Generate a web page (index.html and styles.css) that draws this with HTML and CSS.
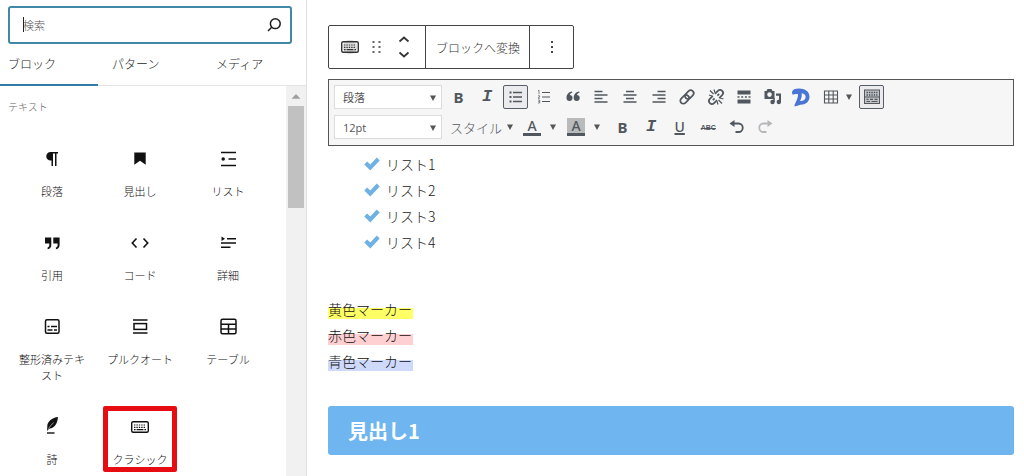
FILE: index.html
```
<!DOCTYPE html>
<html lang="ja">
<head>
<meta charset="utf-8">
<title>ブロックエディター</title>
<link rel="stylesheet" href="styles.css">
</head>
<body>
<svg class="defs" aria-hidden="true">
  <symbol id="keyboard" viewBox="0 0 24 24"><rect x="3.7" y="6.7" width="16.6" height="10.6" rx="1.5" fill="none" stroke="currentColor" stroke-width="1.4"/><path d="M6 10h12M6 12.3h12" stroke="currentColor" stroke-width="1.2" stroke-dasharray="1.4 1"/><path d="M6 14.7h1.6M8.6 14.7h6.8M16.4 14.7H18" stroke="currentColor" stroke-width="1.3"/></symbol>
  <symbol id="caret" viewBox="0 0 8 8"><path d="M1 1.500h6L4 7z" fill="currentColor"/></symbol>
  <symbol id="check" viewBox="0 0 16 16"><path d="M.3 8.400 3.100 5.500l3.200 3L12.800 1.600 15.700 4.600 6.300 14.600z" fill="#6fb1e4"/></symbol>
</svg>
<div class="editor">
  <aside class="inserter">
    <div class="search">
      <input class="search-input" type="search" placeholder="検索" aria-label="検索">
      <span class="text-cursor"></span>
      <button class="search-button" aria-label="検索する"><svg width="16" height="16" viewBox="0 0 16 16" fill="none" stroke="#1e1e1e" stroke-width="1.5"><circle cx="9.300" cy="6.700" r="4.900"/><path d="M5.700 10.300 2 14"/></svg></button>
    </div>
    <div class="tabs" role="tablist">
      <button class="tab tab-active" role="tab" aria-selected="true">ブロック</button>
      <button class="tab" role="tab" aria-selected="false">パターン</button>
      <button class="tab" role="tab" aria-selected="false">メディア</button>
    </div>
    <div class="panel">
      <div class="blocks">
        <h2 class="category">テキスト</h2>
        <div class="block-grid">
          <button class="block"><svg class="icon" viewBox="0 0 24 24"><path d="M10.500 5H18v1.500h-1.500V19H15V6.500h-2V19h-1.500v-5.500h-1a4.250 4.250 0 0 1 0-8.500z" fill="currentColor"/></svg>段落</button>
          <button class="block"><svg class="icon" viewBox="0 0 24 24"><path d="M6.300 5.500h11.400v12.300L12 13.800l-5.700 4z" fill="currentColor"/></svg>見出し</button>
          <button class="block"><svg class="icon" viewBox="0 0 24 24" stroke="currentColor" stroke-width="1.500"><path d="M5 5.500h15M12.500 12H20M5 18.500h15"/><circle cx="7.200" cy="12" r="1" fill="currentColor"/></svg>リスト</button>
          <button class="block"><svg class="icon" viewBox="0 0 24 24" fill="currentColor"><path d="M5 6.500h6.300v7.200c0 2.500-1.200 4.200-3.500 4.500l-.4-1.500c1.200-.3 1.900-1.200 1.900-2.700v-1.500H5zM13.300 6.500h6.300v7.200c0 2.500-1.200 4.200-3.500 4.500l-.4-1.500c1.200-.3 1.900-1.200 1.900-2.700v-1.500h-4.300z"/></svg>引用</button>
          <button class="block"><svg class="icon" viewBox="0 0 24 24" fill="none" stroke="currentColor" stroke-width="1.600"><path d="M8.500 7.500 4.300 12l4.200 4.500M15.500 7.500l4.200 4.500-4.200 4.500"/></svg>コード</button>
          <button class="block"><svg class="icon" viewBox="0 0 24 24" stroke="currentColor" stroke-width="1.500"><path d="M11 7.800h9M5 12h15M5 16.200h9.500"/><path d="M5.500 5.500 9 7.800l-3.500 2.200z" fill="currentColor" stroke="none"/></svg>詳細</button>
          <button class="block"><svg class="icon" viewBox="0 0 24 24" fill="none" stroke="currentColor" stroke-width="1.500"><rect x="5.500" y="4.800" width="13.500" height="13.400" rx="1.500"/><path d="M7.500 11.500h2M11 11.500h6M7.500 15h5M14 15h3" stroke-width="1.300"/></svg>整形済みテキスト</button>
          <button class="block"><svg class="icon" viewBox="0 0 24 24" fill="none" stroke="currentColor" stroke-width="1.500"><path d="M5 5h14.500M5 18h14.500"/><rect x="6" y="8.600" width="12.500" height="5.800"/></svg>プルクオート</button>
          <button class="block"><svg class="icon" viewBox="0 0 24 24" fill="none" stroke="currentColor" stroke-width="1.500"><rect x="5" y="4.300" width="15" height="14.400" rx="1.500"/><path d="M5 9.300h15M5 14h15M12.500 9.300v9.400"/></svg>テーブル</button>
          <button class="block"><svg class="icon" viewBox="0 0 24 24"><path d="M18 2C12.500 2.500 7 6.500 7.300 11.500L7 16l2.800-2.600c4.500-.2 7.500-4.200 8.200-11.400z" fill="currentColor"/><path d="M7.800 15.500c1.500-3.700 3.500-6 6-8" stroke="#fff" stroke-width=".5" fill="none"/><path d="M7 18h7.500" stroke="currentColor" stroke-width="1.400"/></svg>詩</button>
          <button class="block block-marked"><svg class="icon"><use href="#keyboard"/></svg>クラシック</button>
        </div>
      </div>
      <div class="scrollbar" aria-hidden="true"><svg class="scroll-arrow" viewBox="0 0 20 20"><path d="M4.500 13.500 10 7.500l5.500 6z" fill="#a0a0a0"/></svg><div class="scroll-thumb"></div></div>
    </div>
  </aside>

  <main class="content">
    <div class="block-toolbar">
      <div class="segment movers">
        <button class="plain shaded" aria-label="クラシック"><svg class="icon"><use href="#keyboard"/></svg></button>
        <button class="plain" aria-label="ドラッグ"><svg width="12" height="16" viewBox="0 0 12 16" fill="#666"><path d="M1.500 2h2v2h-2zM7.500 2h2v2h-2zM1.500 7h2v2h-2zM7.500 7h2v2h-2zM1.500 12h2v2h-2zM7.500 12h2v2h-2z"/></svg></button>
        <span class="arrows">
          <button class="plain" aria-label="上に移動"><svg width="12" height="10" viewBox="0 0 12 10" fill="none" stroke="#333" stroke-width="1.700"><path d="m1.500 6.500 4.500-4 4.500 4"/></svg></button>
          <button class="plain" aria-label="下に移動"><svg width="12" height="10" viewBox="0 0 12 10" fill="none" stroke="#333" stroke-width="1.700"><path d="m1.500 3.500 4.500 4 4.500-4"/></svg></button>
        </span>
      </div>
      <button class="plain segment convert">ブロックへ変換</button>
      <button class="plain segment options" aria-label="オプション"><svg width="4" height="16" viewBox="0 0 4 16" fill="#444"><path d="M1 2h2v2H1zM1 7h2v2H1zM1 12h2v2H1z"/></svg></button>
    </div>

    <div class="classic-toolbar">
      <div class="tool-row">
        <span class="picker"><select class="picker-select" aria-label="段落スタイル"><option>段落</option></select><svg class="caret picker-caret"><use href="#caret"/></svg></span>
        <div class="tools tools-main">
          <button class="tool glyph bold" aria-label="太字">B</button>
          <button class="tool glyph italic" aria-label="イタリック">I</button>
          <button class="tool tool-on" aria-label="箇条書き"><svg viewBox="0 0 20 20" width="20" height="20"><path d="M7 5.500h9M7 10h9M7 14.500h9" stroke="currentColor" stroke-width="1.300"/><path d="M3.500 4.500h2v2h-2zM3.500 9h2v2h-2zM3.500 13.500h2v2h-2z" fill="currentColor"/></svg></button>
          <button class="tool" aria-label="番号付きリスト"><svg viewBox="0 0 20 20" width="20" height="20" fill="none" stroke="currentColor"><path d="M8 5.500h8M8 10h8M8 14.500h8" stroke-width="1.200"/><path d="m4 4 1-.8v4M4 8.800h1.700v1.100L4 11.200h1.900M4 13h1.700v3H4M4.300 14.500h1.200" stroke-width=".7"/></svg></button>
          <button class="tool" aria-label="引用"><svg viewBox="0 0 20 20" width="20" height="20" fill="currentColor"><path d="M9 4.500C5.500 5 3.500 7.500 3.500 11a3 3 0 1 0 3.200-3c.4-1.200 1.200-1.900 2.600-2.300zM16.200 4.500c-3.500.5-5.500 3-5.500 6.500a3 3 0 1 0 3.200-3c.4-1.200 1.200-1.900 2.600-2.300z"/></svg></button>
          <button class="tool" aria-label="左寄せ"><svg viewBox="0 0 20 20" width="20" height="20" stroke="currentColor" stroke-width="1.700"><path d="M3.500 4.500h8M3.500 8h13M3.500 11.500h8M3.500 15h13"/></svg></button>
          <button class="tool" aria-label="中央寄せ"><svg viewBox="0 0 20 20" width="20" height="20" stroke="currentColor" stroke-width="1.700"><path d="M6 4.500h8M3.500 8h13M6 11.500h8M3.500 15h13"/></svg></button>
          <button class="tool" aria-label="右寄せ"><svg viewBox="0 0 20 20" width="20" height="20" stroke="currentColor" stroke-width="1.700"><path d="M8.500 4.500h8M3.500 8h13M8.500 11.500h8M3.500 15h13"/></svg></button>
          <button class="tool" aria-label="リンク"><svg viewBox="0 0 20 20" width="20" height="20" fill="none" stroke="currentColor" stroke-width="1.700"><g transform="rotate(-45 10 10)"><rect x="1.800" y="7" width="9.800" height="6" rx="3"/><rect x="8.400" y="7" width="9.800" height="6" rx="3"/></g></svg></button>
          <button class="tool" aria-label="リンク解除"><svg viewBox="0 0 20 20" width="20" height="20" fill="none" stroke="currentColor" stroke-width="1.700"><g transform="rotate(-45 10 10)"><path d="M8.500 7H4.300a3 3 0 0 0 0 6H8.500M11.500 7h4.200a3 3 0 0 1 0 6H11.500M5.500 10H8M12 10h2.500"/></g><path d="M4 3.500l3.500 3.500M8 2.500l1 3.200M3 8l3 1M12.500 13l3.500 3.500M11 14.300l1 3.200M14 11l3.500 1" stroke-width="1.200"/></svg></button>
          <button class="tool" aria-label="続きを読む"><svg viewBox="0 0 20 20" width="20" height="20" fill="currentColor"><path d="M3.500 3.500h13v4h-13zM3.500 12.500h13v4h-13zM3.500 9.300h2v1.400h-2zM7.200 9.300h2v1.400h-2zM10.900 9.300h2v1.400h-2zM14.500 9.300h2v1.400h-2z"/></svg></button>
          <button class="tool" aria-label="メディアを追加"><svg viewBox="0 0 20 20" width="20" height="20"><path fill="currentColor" fill-rule="evenodd" d="M1.500 4h2l1-2h4l1 2h2v8h-10zM6.500 5.300a2.300 2.300 0 1 0 0 4.600 2.300 2.300 0 0 0 0-4.600z"/><path fill="currentColor" d="M13 6.500h5V15a2.200 2.200 0 1 1-2-2.200V8.800h-3z"/><circle cx="9.500" cy="15" r="2.200" fill="currentColor"/><path d="M11 15v-4" stroke="currentColor" stroke-width="1.500"/></svg></button>
          <button class="tool brand" aria-label="ショートコード"><svg viewBox="0 0 20 20" width="20" height="20" fill="#4a75d6"><path fill-rule="evenodd" d="M1 5C1.500 2.500 4 1.500 8 1.500c6 0 10.500 3 10.500 8.300 0 5-4 8-9 8L3.800 19.500c-.8-1 .2-2.500 1-4.200C6.300 12 7 10 7 7.200 5 6.700 3 7.500 1.800 7.700 1.200 7 .9 6 1 5zM10.700 6.300c.3 3.200-.3 5.500-1.700 7.700 3.300.2 5.600-1.300 5.600-4.100 0-2-1.400-3.200-3.900-3.600z"/></svg></button>
        </div>
        <button class="tool split" aria-label="テーブル"><svg viewBox="0 0 20 20" width="20" height="20" fill="none" stroke="currentColor" stroke-width="1.100"><path d="M3.500 4h13v12h-13zM3.500 8h13M3.500 12h13M7.800 4v12M12.200 4v12"/></svg><svg class="caret"><use href="#caret"/></svg></button>
        <button class="tool tool-on" aria-label="ツールバー切り替え"><svg viewBox="0 0 20 20" width="20" height="20"><rect x="2.500" y="3" width="15" height="13.500" fill="#c2c4c7" stroke="currentColor"/><path d="M4.500 5.500h11M4.500 8h11" stroke="currentColor" stroke-width="1.500" stroke-dasharray="1.500 .9"/><path d="M3 10h14M4.500 14.500H8M9.500 14.500h6M4.500 12.300h2M8 12.300h3M12.500 12.300h3" stroke="currentColor" stroke-width="1.200"/></svg></button>
      </div>
      <div class="tool-row">
        <span class="picker"><select class="picker-select" aria-label="文字サイズ"><option>12pt</option></select><svg class="caret picker-caret"><use href="#caret"/></svg></span>
        <button class="tool split formats">スタイル<svg class="caret"><use href="#caret"/></svg></button>
        <button class="tool split color" aria-label="文字色"><span class="swatch">A</span><svg class="caret"><use href="#caret"/></svg></button>
        <button class="tool split color" aria-label="背景色"><span class="swatch swatch-fill">A</span><svg class="caret"><use href="#caret"/></svg></button>
        <div class="tools tools-sub">
          <button class="tool glyph bold" aria-label="太字">B</button>
          <button class="tool glyph italic" aria-label="イタリック">I</button>
          <button class="tool glyph under" aria-label="下線">U</button>
          <button class="tool strike" aria-label="打ち消し">ABC</button>
          <button class="tool" aria-label="取り消し"><svg viewBox="0 0 20 20" width="20" height="20"><path d="M5 6.500h6.500a4.200 4.200 0 0 1 0 8.500H8.500" fill="none" stroke="currentColor" stroke-width="1.800"/><path d="M2.500 6.500 7.500 3v7z" fill="currentColor"/></svg></button>
          <button class="tool faded" aria-label="やり直し"><svg viewBox="0 0 20 20" width="20" height="20"><path d="M15 6.500H8.500a4.200 4.200 0 0 0 0 8.500h3" fill="none" stroke="currentColor" stroke-width="1.800"/><path d="M17.500 6.500 12.500 3v7z" fill="currentColor"/></svg></button>
        </div>
      </div>
    </div>

    <ul class="check-list">
      <li><svg class="check"><use href="#check"/></svg>リスト1</li>
      <li><svg class="check"><use href="#check"/></svg>リスト2</li>
      <li><svg class="check"><use href="#check"/></svg>リスト3</li>
      <li><svg class="check"><use href="#check"/></svg>リスト4</li>
    </ul>
    <p class="markers"><mark class="yellow">黄色マーカー</mark><br><mark class="red">赤色マーカー</mark><br><mark class="blue">青色マーカー</mark></p>
    <h2 class="heading">見出し1</h2>
  </main>
</div>
</body>
</html>
```
FILE: styles.css
```
* { box-sizing: border-box; }
body {
  margin: 0;
  font-family: "Noto Sans CJK JP", sans-serif;
  font-size: 12px;
  font-weight: 300;
  color: #1e1e1e;
  background: #fff;
}
button, input, select { font: inherit; color: inherit; }
button { border: 0; padding: 0; background: none; }
svg { display: block; flex: none; }
.defs { position: absolute; width: 0; height: 0; }
.icon { width: 24px; height: 24px; }
.caret { width: 8px; height: 8px; color: #555; }

.editor { display: grid; grid-template-columns: 307px 1fr; height: 100vh; overflow: hidden; }

/* Inserter */
.inserter { display: flex; flex-direction: column; min-height: 0; border-right: 1px solid #e0e0e0; }
.search {
  position: relative;
  display: flex;
  align-items: center;
  height: 38px;
  margin: 6px 14px 0 8px;
  border: 2px solid #4287a5;
  border-radius: 3px;
}
.search-input {
  flex: 1;
  min-width: 0;
  padding: 0 0 0 13px;
  border: 0;
  outline: 0;
  background: none;
  font-size: 11px;
}
.search-input::placeholder { color: #555; }
.text-cursor { position: absolute; left: 13px; top: 9px; width: 1px; height: 15px; background: #222; }
.search-button { padding: 0 8px; }
.tabs { display: flex; gap: 6px; height: 42px; border-bottom: 1px solid #e4e4e4; }
.tab { flex: 1; padding: 0 8px 2px; text-align: left; border-bottom: 2px solid transparent; margin-bottom: -1px; }
.tab-active { border-color: #2f7ba3; }
.panel { display: flex; flex: 1; min-height: 0; }
.blocks { flex: 1; padding: 11px 14px 0 8px; overflow: hidden; }
.category { margin: 0; font-size: 10px; font-weight: 300; line-height: 20px; color: #666; }
.block-grid { display: grid; grid-template-columns: repeat(3, 1fr); padding-top: 14px; }
.block {
  position: relative;
  display: flex;
  flex-direction: column;
  align-items: center;
  gap: 12px;
  padding: 16px 10px;
  font-size: 11px;
  line-height: 16px;
  color: #111;
}
.block-marked::after {
  content: "";
  position: absolute;
  inset: 7px 7px 11px;
  border: 5px solid #e60c12;
  border-radius: 2px;
}
.scrollbar { width: 20px; padding: 0 2px; background: #f1f1f1; }
.scroll-arrow { width: 16px; height: 20px; }
.scroll-thumb { height: 102px; background: #c1c1c1; }

/* Block toolbar */
.content { padding: 25px 10px 0 21px; min-width: 0; }
.block-toolbar { display: flex; width: max-content; height: 44px; border: 1px solid #444; border-radius: 2px; }
.segment + .segment { border-left: 1px solid #444; }
.movers { display: flex; align-items: center; gap: 9px; padding: 0 15px 0 9px; }
.plain { display: flex; align-items: center; justify-content: center; color: #333; }
.shaded { background: radial-gradient(#ddd 40%, transparent 45%); }
.arrows { display: flex; flex-direction: column; gap: 4px; padding-left: 6px; }
.convert { padding: 0 9px 0 10px; }
.options { width: 44px; }

/* Classic toolbar */
.classic-toolbar {
  display: flex;
  flex-direction: column;
  gap: 6px;
  margin-top: 10px;
  padding: 5px 5px 6px;
  border: 1px solid #555;
  background: #f6f6f6;
  color: #50575e;
}
.tool-row { display: flex; align-items: center; height: 24px; }
.picker { position: relative; width: 108px; margin-right: 4px; }
.picker-select {
  display: block;
  appearance: none;
  width: 100%;
  height: 24px;
  padding: 0 8px;
  border: 1px solid #ddd;
  border-radius: 0;
  background: #fff;
  font-family: "Open Sans", "Noto Sans CJK JP", sans-serif;
  font-size: 11px;
  font-weight: 400;
  color: #555;
}
.picker-caret { position: absolute; right: 5px; top: 9px; }
.tools { display: flex; justify-content: space-between; }
.tools-main { width: 368px; margin-right: 5px; }
.tools-sub { width: 168px; }
.tool { display: flex; align-items: center; justify-content: center; width: 25px; height: 24px; flex: none; }
.tool-on { border: 1px solid #555d66; background: #ebebed; border-radius: 2px; }
.glyph { font-family: "Noto Sans", sans-serif; font-size: 15px; line-height: 20px; font-weight: 700; }
.italic { font-family: "Liberation Mono", monospace; font-size: 17px; font-style: italic; }
.under { font-weight: 500; font-size: 14px; text-decoration: underline; text-decoration-thickness: 2px; }
.strike { font-family: "Liberation Sans", sans-serif; font-size: 7px; font-weight: 700; text-decoration: line-through; }
.faded { color: #b5b7ba; }
.split { width: 36px; gap: 4px; margin-right: 4px; }
.formats { width: 72px; font-size: 13px; }
.color { width: 36px; gap: 8px; margin-right: 8px; }
.swatch {
  width: 18px;
  height: 18px;
  border-bottom: 3px solid #50575e;
  font-family: "Noto Sans", sans-serif;
  font-size: 14px;
  font-weight: 500;
  line-height: 15px;
}
.swatch-fill { background: #b9babb; }

/* Post content */
.check-list { list-style: none; margin: 5px 0 0; padding: 0 0 0 36px; font-size: 14px; line-height: 26px; color: #222; }
.check-list li { display: flex; align-items: center; gap: 6px; }
.check { width: 16px; height: 16px; }
.markers { margin: 41px 0 0; font-size: 14px; line-height: 26px; color: #111; }
.markers mark { color: inherit; padding-right: 1px; }
.yellow { background: linear-gradient(transparent 45%, #ffff66 45%); }
.red { background: linear-gradient(transparent 45%, #ffd0d2 45%); }
.blue { background: linear-gradient(transparent 45%, #cfd9fc 45%); }
.heading {
  margin: 32px 0 0;
  padding: 10px 20px;
  border-radius: 3px;
  background: #6fb6f1;
  color: #fff;
  font-size: 20px;
  line-height: 29px;
}
```
